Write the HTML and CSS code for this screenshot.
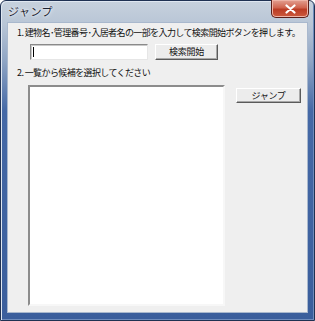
FILE: index.html
```html
<!DOCTYPE html>
<html lang="ja">
<head>
  <meta charset="UTF-8">
  <title>ジャンプ</title>
  <link rel="stylesheet" href="styles.css">
</head>
<body>

  <div class="window">
    <div class="titlebar">
      <span class="title">ジャンプ</span>
      <div class="close">
        <svg width="11" height="10" viewBox="0 0 11 10">
          <path d="M1.5 1.5 L9.5 8.5 M9.5 1.5 L1.5 8.5" stroke="#fff" stroke-width="2.2" stroke-linecap="round"/>
        </svg>
      </div>
    </div>

    <div class="client">
      <p class="step">1. 建物名･管理番号･入居者名の一部を入力して検索開始ボタンを押します。</p>
      <div class="search-row">
        <div class="textbox"><span class="caret"></span></div>
        <button class="btn btn-search">検索開始</button>
      </div>

      <p class="step step-two">2. 一覧から候補を選択してください</p>
      <div class="list-row">
        <div class="listbox"></div>
        <button class="btn btn-jump">ジャンプ</button>
      </div>
    </div>
  </div>

</body>
</html>
```

FILE: styles.css
```css
* {
  box-sizing: border-box;
}

body {
  margin: 0;
  padding: 0;
  width: 315px;
  height: 321px;
  overflow: hidden;
  font-family: "Noto Sans CJK JP", "Noto Sans", sans-serif;
  background: #fff;
}

.window {
  width: 315px;
  height: 321px;
  display: flex;
  flex-direction: column;
  padding: 0 6px 7px 6px;
  border: 1px solid #1f3152;
  border-radius: 6px 6px 0 0;
  background: linear-gradient(to bottom, #c7d1dd 0, #b8c5d6 24px, #8fa5c4 60px, #4569a6 110px, #3a5e9c 100%);
  box-shadow: inset 1px 1px 0 #dfe7f1, inset -1px -1px 0 #6f8cbc;
}

.titlebar {
  height: 21px;
  display: flex;
  justify-content: space-between;
  align-items: flex-start;
}

.title {
  margin-top: 3px;
  margin-left: 1px;
  font-size: 11px;
  line-height: 14px;
  color: #1b2230;
  text-shadow: 0 0 4px #eef3f9, 0 0 2px #fff;
  letter-spacing: 0.5px;
}

.close {
  width: 38px;
  height: 18px;
  margin-top: -1px;
  margin-right: -1px;
  display: flex;
  justify-content: center;
  align-items: center;
  border: 1px solid #5b1f1a;
  border-top: none;
  border-radius: 0 0 5px 5px;
  background: linear-gradient(to bottom, #e3a092 0, #d0644f 45%, #bb3c25 55%, #cc5a3e 100%);
  box-shadow: inset 0 0 0 1px #eeb3a6;
}

.client {
  flex: 1;
  display: flex;
  flex-direction: column;
  padding: 4px 0 0 9px;
  background: #efefef;
  border: 1px solid #a9b8cd;
}

.step {
  margin: 0;
  font-size: 9px;
  line-height: 12px;
  letter-spacing: -0.6px;
  color: #111;
  white-space: nowrap;
}

.search-row {
  display: flex;
  gap: 7px;
  margin-top: 5px;
  margin-left: 13px;
  height: 16px;
}

.textbox {
  width: 118px;
  height: 16px;
  background: #fff;
  border: 1px solid;
  border-color: #8a8a8a #e6e6e6 #e6e6e6 #8a8a8a;
  box-shadow: inset 1px 1px 0 #c9c9c9;
  padding: 2px 0 0 2px;
}

.caret {
  display: block;
  width: 1px;
  height: 10px;
  background: #000;
}

.btn {
  margin: 0;
  padding: 0;
  font-family: inherit;
  font-size: 9px;
  line-height: 12px;
  letter-spacing: -0.3px;
  color: #111;
  background: #ececec;
  border: 1px solid;
  border-color: #fff #5a5a5a #5a5a5a #fff;
  box-shadow: inset -1px -1px 0 #a8a8a8;
}

.btn-search {
  width: 63px;
  height: 16px;
}

.step-two {
  margin-top: 7px;
}

.list-row {
  flex: 1;
  display: flex;
  gap: 11px;
  margin-top: 6px;
  margin-left: 11px;
  margin-bottom: 6px;
}

.listbox {
  width: 197px;
  background: #fff;
  border: 2px solid;
  border-color: #8c8c8c #f7f7f7 #f7f7f7 #8c8c8c;
}

.btn-jump {
  width: 65px;
  height: 15px;
  margin-top: 3px;
}
```
